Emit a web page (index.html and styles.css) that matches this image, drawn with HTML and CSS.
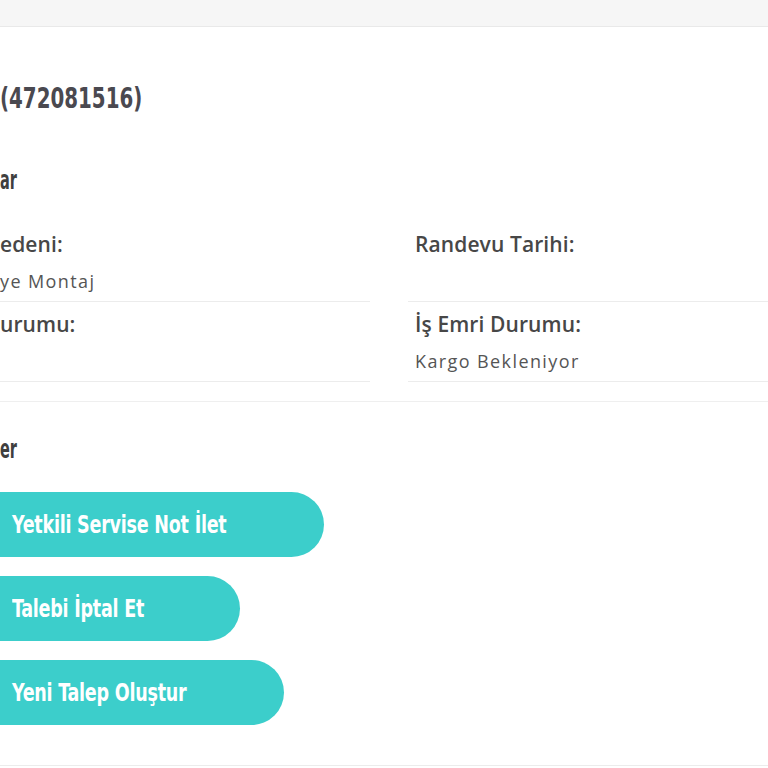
FILE: index.html
```html
<!DOCTYPE html>
<html lang="tr">
<head>
<meta charset="utf-8">
<title>Talep Detayı</title>
<link rel="stylesheet" href="styles.css">
</head>
<body>
<div class="topbar"></div>
<main class="content">
  <h1 class="title"><span class="narrow">(472081516)</span></h1>
  <h2 class="section-title"><span class="narrow">ar</span></h2>
  <div class="info-grid">
    <div class="cell cell-left">
      <div class="label">edeni:</div>
      <div class="value">ye Montaj</div>
    </div>
    <div class="cell cell-right">
      <div class="label">Randevu Tarihi:</div>
      <div class="value"></div>
    </div>
    <div class="cell cell-left">
      <div class="label">urumu:</div>
      <div class="value"></div>
    </div>
    <div class="cell cell-right">
      <div class="label">İş Emri Durumu:</div>
      <div class="value">Kargo Bekleniyor</div>
    </div>
  </div>
  <div class="divider"></div>
  <h2 class="section-title section-actions"><span class="narrow">er</span></h2>
  <div class="actions">
    <button class="action-btn btn-wide"><span class="btn-text">Yetkili Servise Not İlet</span></button>
    <button class="action-btn btn-short"><span class="btn-text">Talebi İptal Et</span></button>
    <button class="action-btn btn-mid"><span class="btn-text">Yeni Talep Oluştur</span></button>
  </div>
  <div class="bottom-line"></div>
</main>
</body>
</html>
```
FILE: styles.css
```css
html, body {
  margin: 0;
  padding: 0;
  background: #ffffff;
  overflow: hidden;
}
body {
  width: 768px;
  height: 768px;
  font-family: "Open Sans", "Liberation Sans", sans-serif;
  color: #454545;
}
.topbar {
  height: 26px;
  background: #f6f6f6;
  border-bottom: 1px solid #e9e9e9;
}
.content {
  display: flex;
  flex-direction: column;
}
.narrow {
  display: inline-block;
  transform: scaleX(0.76);
  transform-origin: left center;
  white-space: nowrap;
}
.title {
  margin: 54px 0 0 0;
  font-family: "DejaVu Sans Condensed", "DejaVu Sans", sans-serif;
  font-weight: 700;
  font-size: 29px;
  line-height: 34px;
  color: #4a4950;
}
.section-title {
  margin: 50px 0 0 0;
  font-family: "DejaVu Sans Condensed", "DejaVu Sans", sans-serif;
  font-weight: 700;
  font-size: 26px;
  line-height: 30px;
  color: #3f3f3f;
}
.section-title .narrow {
  transform: scaleX(0.62);
}
.info-grid {
  margin-top: 27px;
  display: grid;
  grid-template-columns: 370px 360px;
  column-gap: 38px;
}
.cell {
  height: 79px;
  border-bottom: 1px solid #ececec;
  display: flex;
  flex-direction: column;
}
.cell-right {
  padding-left: 7px;
}
.label {
  font-weight: 600;
  font-size: 21px;
  line-height: 28px;
  letter-spacing: 0.1px;
  color: #474747;
  margin-top: 8px;
}
.value {
  font-size: 18px;
  line-height: 24px;
  letter-spacing: 1.4px;
  color: #555555;
  margin-top: 11px;
}
.divider {
  margin-top: 19px;
  border-bottom: 1px solid #efefef;
}
.section-actions {
  margin-top: 32px;
}
.actions {
  margin-top: 28px;
  display: flex;
  flex-direction: column;
  gap: 19px;
}
.action-btn {
  height: 65px;
  margin-left: -40px;
  padding: 0 0 0 52px;
  border: none;
  border-radius: 0 33px 33px 0;
  background: #3ccecb;
  color: #ffffff;
  font-family: "DejaVu Sans Condensed", "DejaVu Sans", sans-serif;
  font-weight: 700;
  font-size: 25px;
  text-align: left;
}
.btn-text {
  display: inline-block;
  transform: scaleX(0.78);
  transform-origin: left center;
  white-space: nowrap;
  letter-spacing: -0.3px;
}
.btn-wide { width: 364px; }
.btn-short { width: 280px; }
.btn-mid { width: 324px; }
.bottom-line {
  margin-top: 40px;
  border-bottom: 1px solid #ececec;
}
```
